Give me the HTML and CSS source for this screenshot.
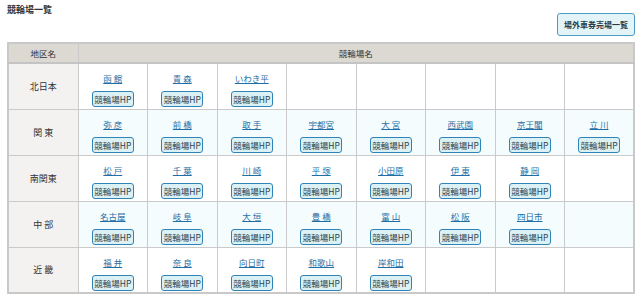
FILE: index.html
```html
<!DOCTYPE html>
<html lang="ja">
<head>
<meta charset="utf-8">
<title>競輪場一覧</title>
<link rel="stylesheet" href="styles.css">
</head>
<body>
<div class="page">
  <h1 class="title">競輪場一覧</h1>
  <div class="toolbar">
    <a class="outlet-btn" href="#">場外車券売場一覧</a>
  </div>
  <table class="venues">
    <colgroup>
      <col class="c-region">
      <col><col><col><col><col><col><col><col>
    </colgroup>
    <thead>
      <tr><th>地区名</th><th colspan="8">競輪場名</th></tr>
    </thead>
    <tbody>
      <tr>
        <th>北日本</th>
        <td><a class="vn" href="#">函 館</a><a class="hp" href="#">競輪場HP</a></td>
        <td><a class="vn" href="#">青 森</a><a class="hp" href="#">競輪場HP</a></td>
        <td><a class="vn" href="#">いわき平</a><a class="hp" href="#">競輪場HP</a></td>
        <td></td><td></td><td></td><td></td><td></td>
      </tr>
      <tr class="alt">
        <th>関 東</th>
        <td><a class="vn" href="#">弥 彦</a><a class="hp" href="#">競輪場HP</a></td>
        <td><a class="vn" href="#">前 橋</a><a class="hp" href="#">競輪場HP</a></td>
        <td><a class="vn" href="#">取 手</a><a class="hp" href="#">競輪場HP</a></td>
        <td><a class="vn" href="#">宇都宮</a><a class="hp" href="#">競輪場HP</a></td>
        <td><a class="vn" href="#">大 宮</a><a class="hp" href="#">競輪場HP</a></td>
        <td><a class="vn" href="#">西武園</a><a class="hp" href="#">競輪場HP</a></td>
        <td><a class="vn" href="#">京王閣</a><a class="hp" href="#">競輪場HP</a></td>
        <td><a class="vn" href="#">立 川</a><a class="hp" href="#">競輪場HP</a></td>
      </tr>
      <tr>
        <th>南関東</th>
        <td><a class="vn" href="#">松 戸</a><a class="hp" href="#">競輪場HP</a></td>
        <td><a class="vn" href="#">千 葉</a><a class="hp" href="#">競輪場HP</a></td>
        <td><a class="vn" href="#">川 崎</a><a class="hp" href="#">競輪場HP</a></td>
        <td><a class="vn" href="#">平 塚</a><a class="hp" href="#">競輪場HP</a></td>
        <td><a class="vn" href="#">小田原</a><a class="hp" href="#">競輪場HP</a></td>
        <td><a class="vn" href="#">伊 東</a><a class="hp" href="#">競輪場HP</a></td>
        <td><a class="vn" href="#">静 岡</a><a class="hp" href="#">競輪場HP</a></td>
        <td></td>
      </tr>
      <tr class="alt">
        <th>中 部</th>
        <td><a class="vn" href="#">名古屋</a><a class="hp" href="#">競輪場HP</a></td>
        <td><a class="vn" href="#">岐 阜</a><a class="hp" href="#">競輪場HP</a></td>
        <td><a class="vn" href="#">大 垣</a><a class="hp" href="#">競輪場HP</a></td>
        <td><a class="vn" href="#">豊 橋</a><a class="hp" href="#">競輪場HP</a></td>
        <td><a class="vn" href="#">富 山</a><a class="hp" href="#">競輪場HP</a></td>
        <td><a class="vn" href="#">松 阪</a><a class="hp" href="#">競輪場HP</a></td>
        <td><a class="vn" href="#">四日市</a><a class="hp" href="#">競輪場HP</a></td>
        <td></td>
      </tr>
      <tr>
        <th>近 畿</th>
        <td><a class="vn" href="#">福 井</a><a class="hp" href="#">競輪場HP</a></td>
        <td><a class="vn" href="#">奈 良</a><a class="hp" href="#">競輪場HP</a></td>
        <td><a class="vn" href="#">向日町</a><a class="hp" href="#">競輪場HP</a></td>
        <td><a class="vn" href="#">和歌山</a><a class="hp" href="#">競輪場HP</a></td>
        <td><a class="vn" href="#">岸和田</a><a class="hp" href="#">競輪場HP</a></td>
        <td></td><td></td><td></td>
      </tr>
    </tbody>
  </table>
</div>
</body>
</html>
```
FILE: styles.css
```css
* { box-sizing: border-box; }
html, body { margin: 0; padding: 0; background: #fff; }
body {
  font-family: "Noto Sans CJK JP", "Noto Sans", sans-serif;
  color: #333;
}
.page { padding: 3px 5px 0 7px; }
.title {
  margin: 0;
  font-size: 9px;
  line-height: 13px;
  font-weight: bold;
  color: #333;
}
.toolbar {
  display: flex;
  justify-content: flex-end;
  margin-top: -3px;
  margin-bottom: 6px;
}
.outlet-btn {
  display: flex;
  align-items: center;
  justify-content: center;
  width: 78px;
  height: 23px;
  font-size: 8px;
  font-weight: bold;
  color: #2a3b47;
  text-decoration: none;
  background: #e3f4f8;
  border: 1px solid #4a9cc2;
  border-radius: 3px;
}
.venues {
  width: 628px;
  table-layout: fixed;
  border-collapse: collapse;
  border: 2px solid #c9c9c9;
}
.venues col.c-region { width: 70px; }
.venues th, .venues td {
  border: 1px solid #cacaca;
  padding: 0;
}
.venues thead tr { height: 20px; }
.venues thead th {
  background: #dcd9d3;
  border-bottom: 2px solid #c4c4c4;
  font-size: 8.5px;
  line-height: 10px;
  font-weight: normal;
  color: #333;
  text-align: center;
  vertical-align: middle;
}
.venues tbody th {
  background: #f3f2f0;
  font-size: 9px;
  font-weight: normal;
  color: #333;
  text-align: center;
  vertical-align: middle;
}
.venues tbody tr { height: 46px; }
.venues tbody td {
  vertical-align: top;
  text-align: center;
  padding-top: 9px;
  background: #fff;
}
.venues tbody tr.alt td { background: #f5fcfd; }
.vn {
  display: block;
  font-size: 8.5px;
  line-height: 11px;
  color: #1f6fa6;
  text-decoration: underline;
}
.hp {
  display: inline-flex;
  align-items: center;
  justify-content: center;
  margin-top: 5px;
  width: 42px;
  height: 16px;
  font-size: 8.5px;
  color: #2d3f4c;
  text-decoration: none;
  background: #dcf1f4;
  border: 1.5px solid #2f83b6;
  border-radius: 3px;
}
```
